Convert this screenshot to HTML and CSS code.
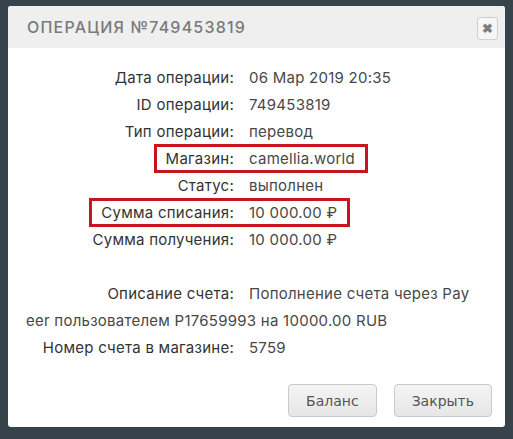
FILE: index.html
```html
<!DOCTYPE html>
<html lang="ru">
<head>
  <meta charset="UTF-8">
  <title>Операция №749453819</title>
  <link rel="stylesheet" href="styles.css">
</head>
<body>
  <div class="dialog">
    <header class="dialog-head">
      <h1 class="dialog-title">Операция №749453819</h1>
      <button class="close-btn" title="Закрыть">&#10006;</button>
    </header>

    <div class="dialog-body">
      <div class="row"><span class="label">Дата операции:</span><span class="value">06 Мар 2019 20:35</span></div>
      <div class="row"><span class="label">ID операции:</span><span class="value">749453819</span></div>
      <div class="row"><span class="label">Тип операции:</span><span class="value">перевод</span></div>
      <div class="row"><span class="label"><span class="hl hl-start">Магазин:</span></span><span class="value hl hl-end">camellia.world</span></div>
      <div class="row"><span class="label">Статус:</span><span class="value">выполнен</span></div>
      <div class="row"><span class="label"><span class="hl hl-start">Сумма списания:</span></span><span class="value hl hl-end">10 000.00 ₽</span></div>
      <div class="row"><span class="label">Сумма получения:</span><span class="value">10 000.00 ₽</span></div>
      <div class="row empty"></div>
      <div class="row wrap"><span class="label">Описание счета:</span><span class="value">Пополнение счета через Payeer пользователем P17659993 на 10000.00 RUB</span></div>
      <div class="row"><span class="label">Номер счета в магазине:</span><span class="value">5759</span></div>
    </div>

    <footer class="dialog-foot">
      <button class="btn">Баланс</button>
      <button class="btn">Закрыть</button>
    </footer>
  </div>
</body>
</html>
```

FILE: styles.css
```css
body {
  margin: 0;
  padding: 6px 8px 0;
  background-color: #37434a;
  font-family: Inter, "Noto Sans", Arial, sans-serif;
}

.dialog {
  background-color: #fff;
  border-radius: 3px;
  overflow: hidden;
  height: 421px;
  display: flex;
  flex-direction: column;
}

.dialog-head {
  background-color: #efefef;
  height: 42px;
  display: flex;
  align-items: center;
  justify-content: space-between;
  padding: 0 7px 0 19px;
}

.dialog-title {
  margin: 0;
  font-size: 16px;
  font-weight: 500;
  letter-spacing: 1.2px;
  text-transform: uppercase;
  color: #7a7a7a;
}

.close-btn {
  width: 21px;
  height: 23px;
  padding: 0;
  margin-top: 2px;
  border: 1px solid #cfcfcf;
  border-radius: 3px;
  background: #f6f6f6;
  color: #7d7d7d;
  font-size: 13px;
  font-weight: bold;
  line-height: 21px;
  cursor: pointer;
}

.dialog-body {
  padding: 16px 32px 0 18px;
  font-size: 15px;
  letter-spacing: 0.25px;
  color: #333;
}

.row {
  line-height: 27px;
  height: 27px;
  white-space: nowrap;
}

.row.wrap {
  height: auto;
  white-space: normal;
  word-break: break-all;
}

.label {
  display: inline-block;
  width: 208px;
  text-align: right;
}

.value {
  margin-left: 15px;
  color: #484848;
}

.hl {
  display: inline-block;
  line-height: 23px;
  margin-top: -1px;
  border: 3px solid #c8141e;
  vertical-align: top;
}

.hl-start {
  border-right: 0;
  padding-left: 9px;
  padding-right: 15px;
  margin-right: -15px;
}

.hl-end {
  border-left: 0;
  padding-right: 10px;
}

.dialog-foot {
  margin-top: auto;
  display: flex;
  justify-content: flex-end;
  gap: 17px;
  padding: 0 13px 10px;
}

.btn {
  height: 33px;
  padding: 0 17px;
  border: 1px solid #c9c9c9;
  border-radius: 4px;
  background: linear-gradient(#f4f4f4, #e6e6e6);
  color: #555;
  font-family: "DejaVu Sans", Verdana, sans-serif;
  font-size: 14px;
  cursor: pointer;
}
```
